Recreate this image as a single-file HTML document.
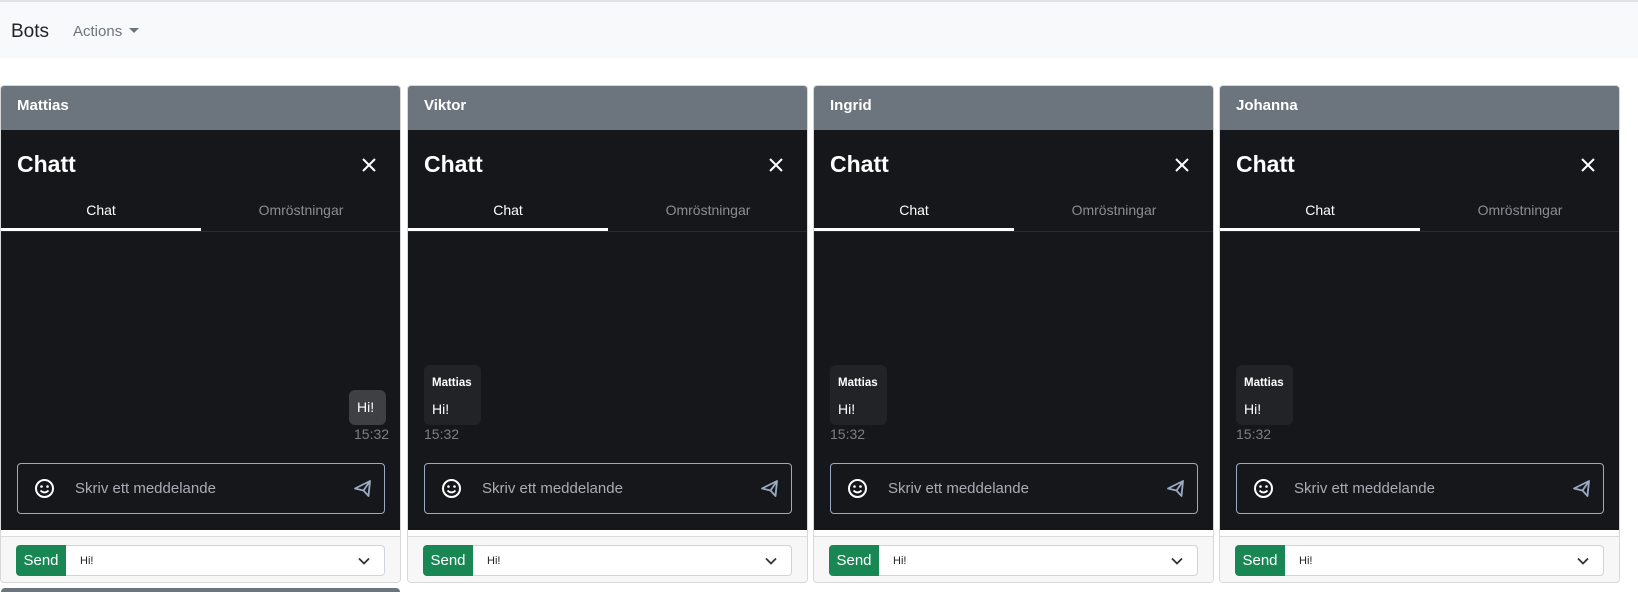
<!DOCTYPE html>
<html><head><style>
*{box-sizing:border-box;margin:0;padding:0}
body{width:1638px;height:590px;background:#fff;font-family:"Liberation Sans",Arial,sans-serif;position:relative;overflow:hidden}
.nav{position:absolute;left:0;top:0;width:1638px;height:58px;background:#f8f9fa;border-top:2px solid #dee2e6}
.bots{position:absolute;left:11px;top:19px;font-size:19px;color:#212529}
.act{position:absolute;left:73px;top:21px;font-size:15px;color:#6c757d}
.act:after{content:"";display:inline-block;margin-left:7px;vertical-align:3px;border-left:5px solid transparent;border-right:5px solid transparent;border-top:5px solid #6c757d}
.card{position:absolute;top:85px;width:401px;height:498px;border:1px solid #d8d8d8;border-radius:4px;overflow:hidden;background:#fff}
.hd{position:absolute;left:0;top:0;width:100%;height:44px;background:#6c757d;color:#fff;font-weight:bold;font-size:15px;padding:11px 16px}
.dk{position:absolute;left:0;top:44px;width:100%;height:400px;background:#16171b}
.ti{position:absolute;left:16px;top:21px;color:#fff;font-weight:bold;font-size:23px}
.x{position:absolute;left:358px;top:25px;width:20px;height:20px}
.tab{position:absolute;top:72px;font-size:14px;width:200px;text-align:center}
.ul{position:absolute;left:0;top:98px;width:200px;height:3px;background:#fff}
.bl{position:absolute;left:0;top:101px;width:100%;height:1px;background:#2b2c30}
.bub{position:absolute;border-radius:6px;background:#222327;color:#fff}
.ts{position:absolute;top:296px;font-size:14px;color:#7d7f84}
.inp{position:absolute;left:16px;top:333px;width:368px;height:51px;border:1px solid #9aaac2;border-radius:4px}
.ph{position:absolute;left:57px;top:16px;font-size:15px;color:#a8adb5}
.ft{position:absolute;left:0;top:450px;width:100%;height:48px;background:#f7f7f7;border-top:1px solid #dcdcdc}
.send{position:absolute;left:15px;top:8px;width:50px;height:31px;background:#198754;color:#fff;font-size:15px;text-align:center;line-height:31px;border-radius:4px 0 0 4px}
.sel{position:absolute;left:65px;top:8px;width:319px;height:31px;background:#fff;border:1px solid #ced4da;border-left:none;border-radius:0 4px 4px 0;font-size:11px;color:#222;padding:9px 0 0 14px}
</style></head><body>
<div class="nav"><span class="bots">Bots</span><span class="act">Actions</span></div>

<div class="card" style="left:0">
<div class="hd">Mattias</div>
<div class="dk">
<div class="ti">Chatt</div>
<svg class="x" viewBox="0 0 20 20"><path d="M4 4L16 16M16 4L4 16" stroke="#fff" stroke-width="2"/></svg>
<div class="tab" style="left:0;color:#fff">Chat</div><div class="tab" style="left:200px;color:#8a8d93">Omröstningar</div>
<div class="ul"></div><div class="bl"></div>
<div class="bub" style="left:348px;top:260px;width:37px;height:35px;background:#3f4044;font-size:14px;padding:9px 0 0 8px">Hi!</div>
<div class="ts" style="left:353px">15:32</div>
<div class="inp"><svg style="position:absolute;left:16px;top:14px" width="21" height="21" viewBox="0 0 21 21"><circle cx="10.5" cy="10.5" r="8.5" fill="none" stroke="#fff" stroke-width="2"/><circle cx="7.5" cy="8.5" r="1.3" fill="#fff"/><circle cx="13.5" cy="8.5" r="1.3" fill="#fff"/><path d="M6.5 12.5Q10.5 16.5 14.5 12.5" fill="none" stroke="#fff" stroke-width="1.8"/></svg><span class="ph">Skriv ett meddelande</span><svg style="position:absolute;left:335px;top:15px" width="19" height="19" viewBox="0 0 19 19"><path d="M2 9.5L17 2L15.5 17L10.5 11.5Z M10.5 11.5L17 2" fill="none" stroke="#9aaac2" stroke-width="1.8" stroke-linejoin="round"/></svg></div>
</div>
<div class="ft"><div class="send">Send</div><div class="sel">Hi!<svg style="position:absolute;right:14px;top:11px" width="12" height="8" viewBox="0 0 12 8"><path d="M1 1.5l5 5 5-5" fill="none" stroke="#333" stroke-width="1.8"/></svg></div></div>
</div>

<div class="card" style="left:407px">
<div class="hd">Viktor</div>
<div class="dk">
<div class="ti">Chatt</div>
<svg class="x" viewBox="0 0 20 20"><path d="M4 4L16 16M16 4L4 16" stroke="#fff" stroke-width="2"/></svg>
<div class="tab" style="left:0;color:#fff">Chat</div><div class="tab" style="left:200px;color:#8a8d93">Omröstningar</div>
<div class="ul"></div><div class="bl"></div>
<div class="bub" style="left:16px;top:235px;width:57px;height:60px"><div style="position:absolute;left:8px;top:12px;font-size:11.5px;font-weight:bold">Mattias</div><div style="position:absolute;left:8px;top:36px;font-size:14px">Hi!</div></div>
<div class="ts" style="left:16px">15:32</div>
<div class="inp"><svg style="position:absolute;left:16px;top:14px" width="21" height="21" viewBox="0 0 21 21"><circle cx="10.5" cy="10.5" r="8.5" fill="none" stroke="#fff" stroke-width="2"/><circle cx="7.5" cy="8.5" r="1.3" fill="#fff"/><circle cx="13.5" cy="8.5" r="1.3" fill="#fff"/><path d="M6.5 12.5Q10.5 16.5 14.5 12.5" fill="none" stroke="#fff" stroke-width="1.8"/></svg><span class="ph">Skriv ett meddelande</span><svg style="position:absolute;left:335px;top:15px" width="19" height="19" viewBox="0 0 19 19"><path d="M2 9.5L17 2L15.5 17L10.5 11.5Z M10.5 11.5L17 2" fill="none" stroke="#9aaac2" stroke-width="1.8" stroke-linejoin="round"/></svg></div>
</div>
<div class="ft"><div class="send">Send</div><div class="sel">Hi!<svg style="position:absolute;right:14px;top:11px" width="12" height="8" viewBox="0 0 12 8"><path d="M1 1.5l5 5 5-5" fill="none" stroke="#333" stroke-width="1.8"/></svg></div></div>
</div>

<div class="card" style="left:813px">
<div class="hd">Ingrid</div>
<div class="dk">
<div class="ti">Chatt</div>
<svg class="x" viewBox="0 0 20 20"><path d="M4 4L16 16M16 4L4 16" stroke="#fff" stroke-width="2"/></svg>
<div class="tab" style="left:0;color:#fff">Chat</div><div class="tab" style="left:200px;color:#8a8d93">Omröstningar</div>
<div class="ul"></div><div class="bl"></div>
<div class="bub" style="left:16px;top:235px;width:57px;height:60px"><div style="position:absolute;left:8px;top:12px;font-size:11.5px;font-weight:bold">Mattias</div><div style="position:absolute;left:8px;top:36px;font-size:14px">Hi!</div></div>
<div class="ts" style="left:16px">15:32</div>
<div class="inp"><svg style="position:absolute;left:16px;top:14px" width="21" height="21" viewBox="0 0 21 21"><circle cx="10.5" cy="10.5" r="8.5" fill="none" stroke="#fff" stroke-width="2"/><circle cx="7.5" cy="8.5" r="1.3" fill="#fff"/><circle cx="13.5" cy="8.5" r="1.3" fill="#fff"/><path d="M6.5 12.5Q10.5 16.5 14.5 12.5" fill="none" stroke="#fff" stroke-width="1.8"/></svg><span class="ph">Skriv ett meddelande</span><svg style="position:absolute;left:335px;top:15px" width="19" height="19" viewBox="0 0 19 19"><path d="M2 9.5L17 2L15.5 17L10.5 11.5Z M10.5 11.5L17 2" fill="none" stroke="#9aaac2" stroke-width="1.8" stroke-linejoin="round"/></svg></div>
</div>
<div class="ft"><div class="send">Send</div><div class="sel">Hi!<svg style="position:absolute;right:14px;top:11px" width="12" height="8" viewBox="0 0 12 8"><path d="M1 1.5l5 5 5-5" fill="none" stroke="#333" stroke-width="1.8"/></svg></div></div>
</div>

<div class="card" style="left:1219px">
<div class="hd">Johanna</div>
<div class="dk">
<div class="ti">Chatt</div>
<svg class="x" viewBox="0 0 20 20"><path d="M4 4L16 16M16 4L4 16" stroke="#fff" stroke-width="2"/></svg>
<div class="tab" style="left:0;color:#fff">Chat</div><div class="tab" style="left:200px;color:#8a8d93">Omröstningar</div>
<div class="ul"></div><div class="bl"></div>
<div class="bub" style="left:16px;top:235px;width:57px;height:60px"><div style="position:absolute;left:8px;top:12px;font-size:11.5px;font-weight:bold">Mattias</div><div style="position:absolute;left:8px;top:36px;font-size:14px">Hi!</div></div>
<div class="ts" style="left:16px">15:32</div>
<div class="inp"><svg style="position:absolute;left:16px;top:14px" width="21" height="21" viewBox="0 0 21 21"><circle cx="10.5" cy="10.5" r="8.5" fill="none" stroke="#fff" stroke-width="2"/><circle cx="7.5" cy="8.5" r="1.3" fill="#fff"/><circle cx="13.5" cy="8.5" r="1.3" fill="#fff"/><path d="M6.5 12.5Q10.5 16.5 14.5 12.5" fill="none" stroke="#fff" stroke-width="1.8"/></svg><span class="ph">Skriv ett meddelande</span><svg style="position:absolute;left:335px;top:15px" width="19" height="19" viewBox="0 0 19 19"><path d="M2 9.5L17 2L15.5 17L10.5 11.5Z M10.5 11.5L17 2" fill="none" stroke="#9aaac2" stroke-width="1.8" stroke-linejoin="round"/></svg></div>
</div>
<div class="ft"><div class="send">Send</div><div class="sel">Hi!<svg style="position:absolute;right:14px;top:11px" width="12" height="8" viewBox="0 0 12 8"><path d="M1 1.5l5 5 5-5" fill="none" stroke="#333" stroke-width="1.8"/></svg></div></div>
</div>

<div style="position:absolute;left:1px;top:588px;width:399px;height:4px;background:#6c757d;border-radius:4px 4px 0 0"></div>
</body></html>
